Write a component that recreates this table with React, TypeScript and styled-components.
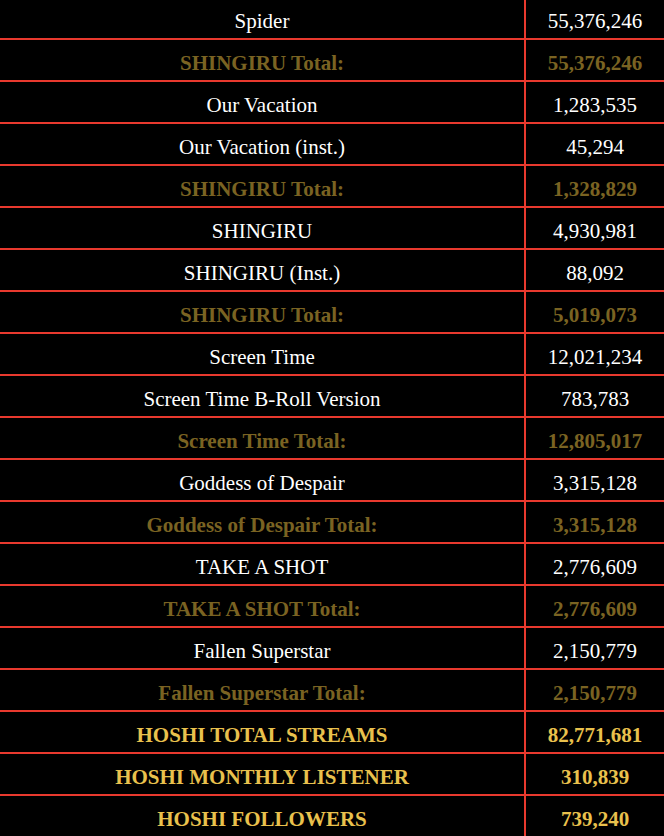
import React from "react";
import styled, { createGlobalStyle } from "styled-components";

const GlobalStyle = createGlobalStyle`
  html, body {
    margin: 0;
    padding: 0;
    background: #000;
  }
  body {
    font-family: "Liberation Serif", "Times New Roman", serif;
  }
`;

type Kind = "song" | "total" | "grand";

const Table = styled.div`
  display: flex;
  flex-direction: column;
  margin-top: -2px;
  width: 664px;
  background: #000;
`;

const Row = styled.div`
  display: grid;
  grid-template-columns: 526px 138px;
  height: 42px;
  box-sizing: border-box;
  border-bottom: 2px solid #e8392e;
`;

const colorFor = (k: Kind) =>
  k === "song" ? "#ffffff" : k === "total" ? "#7a6322" : "#e9c14d";

const Cell = styled.div<{ $kind: Kind; $divider?: boolean }>`
  display: flex;
  align-items: center;
  justify-content: center;
  box-sizing: border-box;
  padding-top: 6px;
  font-size: 21px;
  color: ${(p) => colorFor(p.$kind)};
  font-weight: ${(p) => (p.$kind === "song" ? 400 : 700)};
  border-right: ${(p) => (p.$divider ? "2px solid #e8392e" : "none")};
  white-space: nowrap;
`;

const rows: [string, string, Kind][] = [
  ["Spider", "55,376,246", "song"],
  ["SHINGIRU Total:", "55,376,246", "total"],
  ["Our Vacation", "1,283,535", "song"],
  ["Our Vacation (inst.)", "45,294", "song"],
  ["SHINGIRU Total:", "1,328,829", "total"],
  ["SHINGIRU", "4,930,981", "song"],
  ["SHINGIRU (Inst.)", "88,092", "song"],
  ["SHINGIRU Total:", "5,019,073", "total"],
  ["Screen Time", "12,021,234", "song"],
  ["Screen Time B-Roll Version", "783,783", "song"],
  ["Screen Time Total:", "12,805,017", "total"],
  ["Goddess of Despair", "3,315,128", "song"],
  ["Goddess of Despair Total:", "3,315,128", "total"],
  ["TAKE A SHOT", "2,776,609", "song"],
  ["TAKE A SHOT Total:", "2,776,609", "total"],
  ["Fallen Superstar", "2,150,779", "song"],
  ["Fallen Superstar Total:", "2,150,779", "total"],
  ["HOSHI TOTAL STREAMS", "82,771,681", "grand"],
  ["HOSHI MONTHLY LISTENER", "310,839", "grand"],
  ["HOSHI FOLLOWERS", "739,240", "grand"],
];

export default function App() {
  return (
    <>
      <GlobalStyle />
      <Table>
        {rows.map(([name, value, kind], i) => (
          <Row key={i}>
            <Cell $kind={kind} $divider>
              {name}
            </Cell>
            <Cell $kind={kind}>{value}</Cell>
          </Row>
        ))}
      </Table>
    </>
  );
}
